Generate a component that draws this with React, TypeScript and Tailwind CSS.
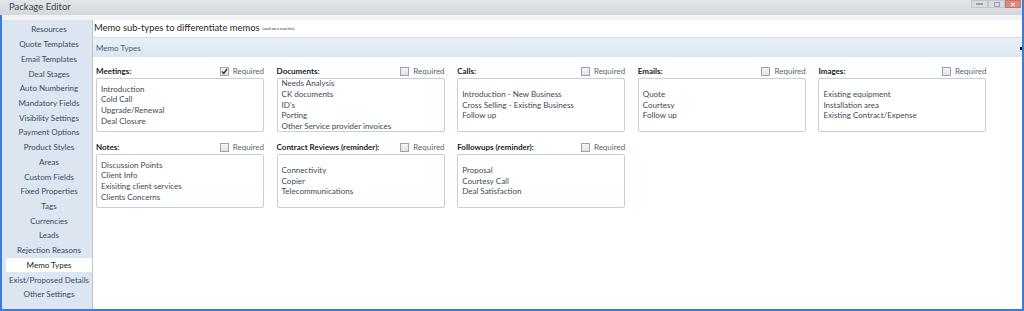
import React from 'react'

// メモ種別エディタ画面
type MemoGroup = { label: string; required: boolean; items: string[] }

const navItems = [
  'Resources',
  'Quote Templates',
  'Email Templates',
  'Deal Stages',
  'Auto Numbering',
  'Mandatory Fields',
  'Visibility Settings',
  'Payment Options',
  'Product Styles',
  'Areas',
  'Custom Fields',
  'Fixed Properties',
  'Tags',
  'Currencies',
  'Leads',
  'Rejection Reasons',
  'Memo Types',
  'Exist/Proposed Details',
  'Other Settings',
]

const groups: MemoGroup[] = [
  { label: 'Meetings:', required: true, items: ['Introduction', 'Cold Call', 'Upgrade/Renewal', 'Deal Closure'] },
  {
    label: 'Documents:',
    required: false,
    items: ['Needs Analysis', 'CK documents', "ID's", 'Porting', 'Other Service provider invoices'],
  },
  { label: 'Calls:', required: false, items: ['Introduction - New Business', 'Cross Selling - Existing Business', 'Follow up'] },
  { label: 'Emails:', required: false, items: ['Quote', 'Courtesy', 'Follow up'] },
  { label: 'Images:', required: false, items: ['Existing equipment', 'Installation area', 'Existing Contract/Expense'] },
  {
    label: 'Notes:',
    required: false,
    items: ['Discussion Points', 'Client Info', 'Exisiting client services', 'Clients Concerns'],
  },
  { label: 'Contract Reviews (reminder):', required: false, items: ['Connectivity', 'Copier', 'Telecommunications'] },
  { label: 'Followups (reminder):', required: false, items: ['Proposal', 'Courtesy Call', 'Deal Satisfaction'] },
]

function CheckBox({ checked }: { checked: boolean }) {
  return (
    <div className="w-[9px] h-[9px] border border-[#9aa4b0] bg-gradient-to-b from-[#f4f5f7] to-[#dfe3e8] flex items-center justify-center">
      {checked && (
        <svg width="7" height="7" viewBox="0 0 7 7">
          <path d="M1 3.6 L2.8 5.4 L6 1" stroke="#2a3440" strokeWidth="1.4" fill="none" />
        </svg>
      )}
    </div>
  )
}

function MemoCard({ group }: { group: MemoGroup }) {
  return (
    <div className="flex flex-col">
      <div className="h-[12px] flex items-center justify-between whitespace-nowrap">
        <span className="font-bold text-[#222]">{group.label}</span>
        <div className="flex items-center gap-[4px]">
          <CheckBox checked={group.required} />
          <span className="text-[#5b646e]">Required</span>
        </div>
      </div>
      <div className="mt-[1px] h-[54px] border border-[#c3cfdc] rounded-[2px] bg-white flex flex-col justify-center pl-[4px] leading-[10.7px] text-[#3d4a58] whitespace-nowrap">
        {group.items.map((item, i) => (
          <div key={i}>{item}</div>
        ))}
      </div>
    </div>
  )
}

export default function App() {
  return (
    <div
      className="w-[1024px] h-[311px] overflow-hidden flex flex-col bg-[#e9eef4] text-[8px]"
      style={{ fontFamily: 'Lato, "Liberation Sans", sans-serif' }}
    >
      {/* タイトルバー */}
      <div className="h-[15px] shrink-0 flex items-center justify-between bg-gradient-to-b from-[#e2e5e9] to-[#d3d7dc] border-r-2 border-[#3b7be0]">
        <span className="pl-[9px] text-[9.5px] text-[#3f3f3f]">Package Editor</span>
        <div className="flex self-start mr-[1px]">
          <div className="w-[17px] h-[8px] bg-[#d8dbe0] border border-[#c2c6cc] flex items-center justify-center">
            <div className="w-[7px] h-[2px] bg-[#9aa0a8]" />
          </div>
          <div className="w-[17px] h-[8px] bg-[#d8dbe0] border border-[#c2c6cc] flex items-center justify-center">
            <div className="w-[6px] h-[5px] border border-[#9aa0a8]" />
          </div>
          <div className="w-[16px] h-[8px] bg-[#d98b80] border border-[#c4756b] flex items-center justify-center text-[7px] leading-none text-white">
            ✕
          </div>
        </div>
      </div>

      {/* 本体 */}
      <div className="flex-1 flex flex-col border-l-2 border-r-2 border-b-2 border-[#3b7be0] bg-[#f3f5f8]">
        <div className="h-[5px] shrink-0 bg-[#f1f3f6]" />
        <div className="flex-1 flex min-h-0">
          {/* サイドバー */}
          <div className="w-[91px] shrink-0 bg-[#dce5f0] border-r border-[#b9c5d3] pt-[2px] pl-[4px] text-[#3a4b5e] whitespace-nowrap">
            {navItems.map((item) => (
              <div
                key={item}
                className={
                  item === 'Memo Types'
                    ? 'h-[14.72px] flex items-center justify-center bg-white rounded-[2px] text-[#222]'
                    : 'h-[14.72px] flex items-center justify-center'
                }
              >
                {item}
              </div>
            ))}
          </div>

          {/* メイン */}
          <div className="flex-1 flex flex-col bg-white">
            <div className="h-[18px] shrink-0 flex items-center pl-[1px] border-b border-[#d5dde6] text-[#1f1f1f] whitespace-nowrap">
              <span className="text-[9.4px]">Memo sub-types to differentiate memos</span>
              <span className="ml-[3px] text-[3.7px]">(each on a new line)</span>
            </div>
            <div className="h-[19px] shrink-0 flex items-center justify-between pl-[3px] bg-gradient-to-b from-[#eaf0f8] to-[#dbe5f1] text-[#4d5d6e]">
              <span>Memo Types</span>
              <div className="w-[2px] h-[3px] bg-black mt-[1px]" />
            </div>
            <div className="pt-[8px] pl-[3px] grid grid-cols-[repeat(5,168px)] gap-x-[12.6px] gap-y-[9px]">
              {groups.map((g) => (
                <MemoCard key={g.label} group={g} />
              ))}
            </div>
          </div>
        </div>
      </div>
    </div>
  )
}
